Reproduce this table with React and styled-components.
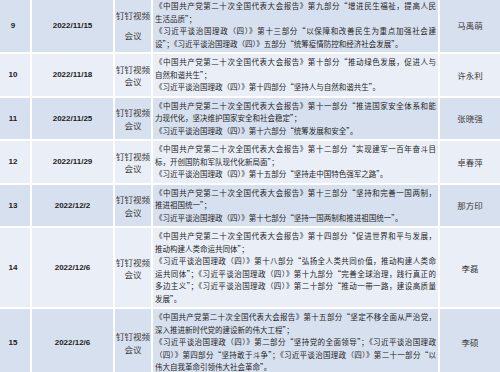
import React from 'react'
import styled, { createGlobalStyle } from 'styled-components'

const GlobalStyle = createGlobalStyle`
  html, body {
    margin: 0;
    padding: 0;
    background: #ffffff;
    overflow: hidden;
  }
`

const rows = [
  {
    no: '9',
    date: '2022/11/15',
    name: '马禹萌',
    tall: true,
    paras: [
      ['《中国共产党第二十次全国代表大会报告》第九部分“增进民生福祉，提高人民', '生活品质”；'],
      ['《习近平谈治国理政（四）》第十三部分“以保障和改善民生为重点加强社会建', '设”；《习近平谈治国理政（四）》五部分“统筹疫情防控和经济社会发展”。'],
    ],
  },
  {
    no: '10',
    date: '2022/11/18',
    name: '许永利',
    paras: [
      ['《中国共产党第二十次全国代表大会报告》第十部分“推动绿色发展，促进人与', '自然和谐共生”；'],
      ['《习近平谈治国理政（四）》第十四部分“坚持人与自然和谐共生”。'],
    ],
  },
  {
    no: '11',
    date: '2022/11/25',
    name: '张晓强',
    paras: [
      ['《中国共产党第二十次全国代表大会报告》第十一部分“推进国家安全体系和能', '力现代化，坚决维护国家安全和社会稳定”；'],
      ['《习近平谈治国理政（四）》第十六部分“统筹发展和安全”。'],
    ],
  },
  {
    no: '12',
    date: '2022/11/29',
    name: '卓春萍',
    paras: [
      ['《中国共产党第二十次全国代表大会报告》第十二部分“实现建军一百年奋斗目', '标，开创国防和军队现代化新局面”；'],
      ['《习近平谈治国理政（四）》第十五部分“坚持走中国特色强军之路”。'],
    ],
  },
  {
    no: '13',
    date: '2022/12/2',
    name: '那方印',
    paras: [
      ['《中国共产党第二十次全国代表大会报告》第十三部分“坚持和完善一国两制，', '推进祖国统一”；'],
      ['《习近平谈治国理政（四）》第十七部分“坚持一国两制和推进祖国统一”。'],
    ],
  },
  {
    no: '14',
    date: '2022/12/6',
    name: '李磊',
    paras: [
      ['《中国共产党第二十次全国代表大会报告》第十四部分“促进世界和平与发展，', '推动构建人类命运共同体”；'],
      [
        '《习近平谈治国理政（四）》第十八部分“弘扬全人类共同价值，推动构建人类命',
        '运共同体”；《习近平谈治国理政（四）》第十九部分“完善全球治理，践行真正的',
        '多边主义”；《习近平谈治国理政（四）》第二十部分“推动一带一路，建设高质量',
        '发展”。',
      ],
    ],
  },
  {
    no: '15',
    date: '2022/12/6',
    name: '李硕',
    paras: [
      ['《中国共产党第二十次全国代表大会报告》第十五部分“坚定不移全面从严治党，', '深入推进新时代党的建设新的伟大工程”；'],
      [
        '《习近平谈治国理政（四）》第二部分“坚持党的全面领导”；《习近平谈治国理政',
        '（四）》第四部分“坚持敢于斗争”；《习近平谈治国理政（四）》第二十一部分“以',
        '伟大自我革命引领伟大社会革命”。',
      ],
    ],
  },
]

function App() {
  return (
    <>
      <GlobalStyle />
      <Table>
        {rows.map((row, i) => (
          <Row key={row.no}>
            <NumCell $dark={i % 2 === 0}>{row.no}</NumCell>
            <DateCell $dark={i % 2 === 0}>{row.date}</DateCell>
            <MeetCell $dark={i % 2 === 0} $tall={row.tall}>
              <span>钉钉视频</span>
              <span>会议</span>
            </MeetCell>
            <TextCell $dark={i % 2 === 0}>
              {row.paras.map((lines, p) => (
                <Para key={p}>
                  {lines.map((line, l) => (
                    <Line key={l} $full={l < lines.length - 1}>{line}</Line>
                  ))}
                </Para>
              ))}
            </TextCell>
            <NameCell $dark={i % 2 === 0}>{row.name}</NameCell>
          </Row>
        ))}
      </Table>
    </>
  )
}

export default App

const Table = styled.div`
  display: flex;
  flex-direction: column;
  gap: 2px;
  width: 500px;
  margin-top: -2px;
  background: #ffffff;
`

const Row = styled.div`
  display: grid;
  grid-template-columns: 30px 81px 36px 285px 60px;
  column-gap: 2px;
`

const Cell = styled.div`
  background: ${props => (props.$dark ? '#d7e0ef' : '#e9eef7')};
  display: flex;
  align-items: center;
  justify-content: center;
`

const NumCell = styled(Cell)`
  padding-right: 4px;
  font-family: "Liberation Sans", Arial, sans-serif;
  font-size: 8px;
  font-weight: 700;
  color: #222222;
`

const DateCell = styled(Cell)`
  font-family: "Liberation Sans", Arial, sans-serif;
  font-size: 8px;
  font-weight: 700;
  color: #222222;
`

const MeetCell = styled(Cell)`
  flex-direction: column;
  gap: ${props => (props.$tall ? '8px' : '0')};
  padding-top: ${props => (props.$tall ? '0' : '1px')};
  font-family: "Noto Sans CJK SC", sans-serif;
  font-size: 8.5px;
  line-height: 12.5px;
  color: #3a3a3a;
`

const TextCell = styled(Cell)`
  flex-direction: column;
  align-items: stretch;
  justify-content: flex-start;
  padding: 2px 2px 2px 2px;
  font-family: "Noto Sans CJK SC", sans-serif;
  font-size: 7.5px;
  line-height: 12.5px;
  color: #262626;
`

const Para = styled.div`
  display: flex;
  flex-direction: column;
`

const Line = styled.div`
  white-space: nowrap;
  text-align: justify;
  text-align-last: ${props => (props.$full ? 'justify' : 'left')};
`

const NameCell = styled(Cell)`
  font-family: "Noto Sans CJK SC", sans-serif;
  font-size: 8.5px;
  color: #3a3a3a;
`
